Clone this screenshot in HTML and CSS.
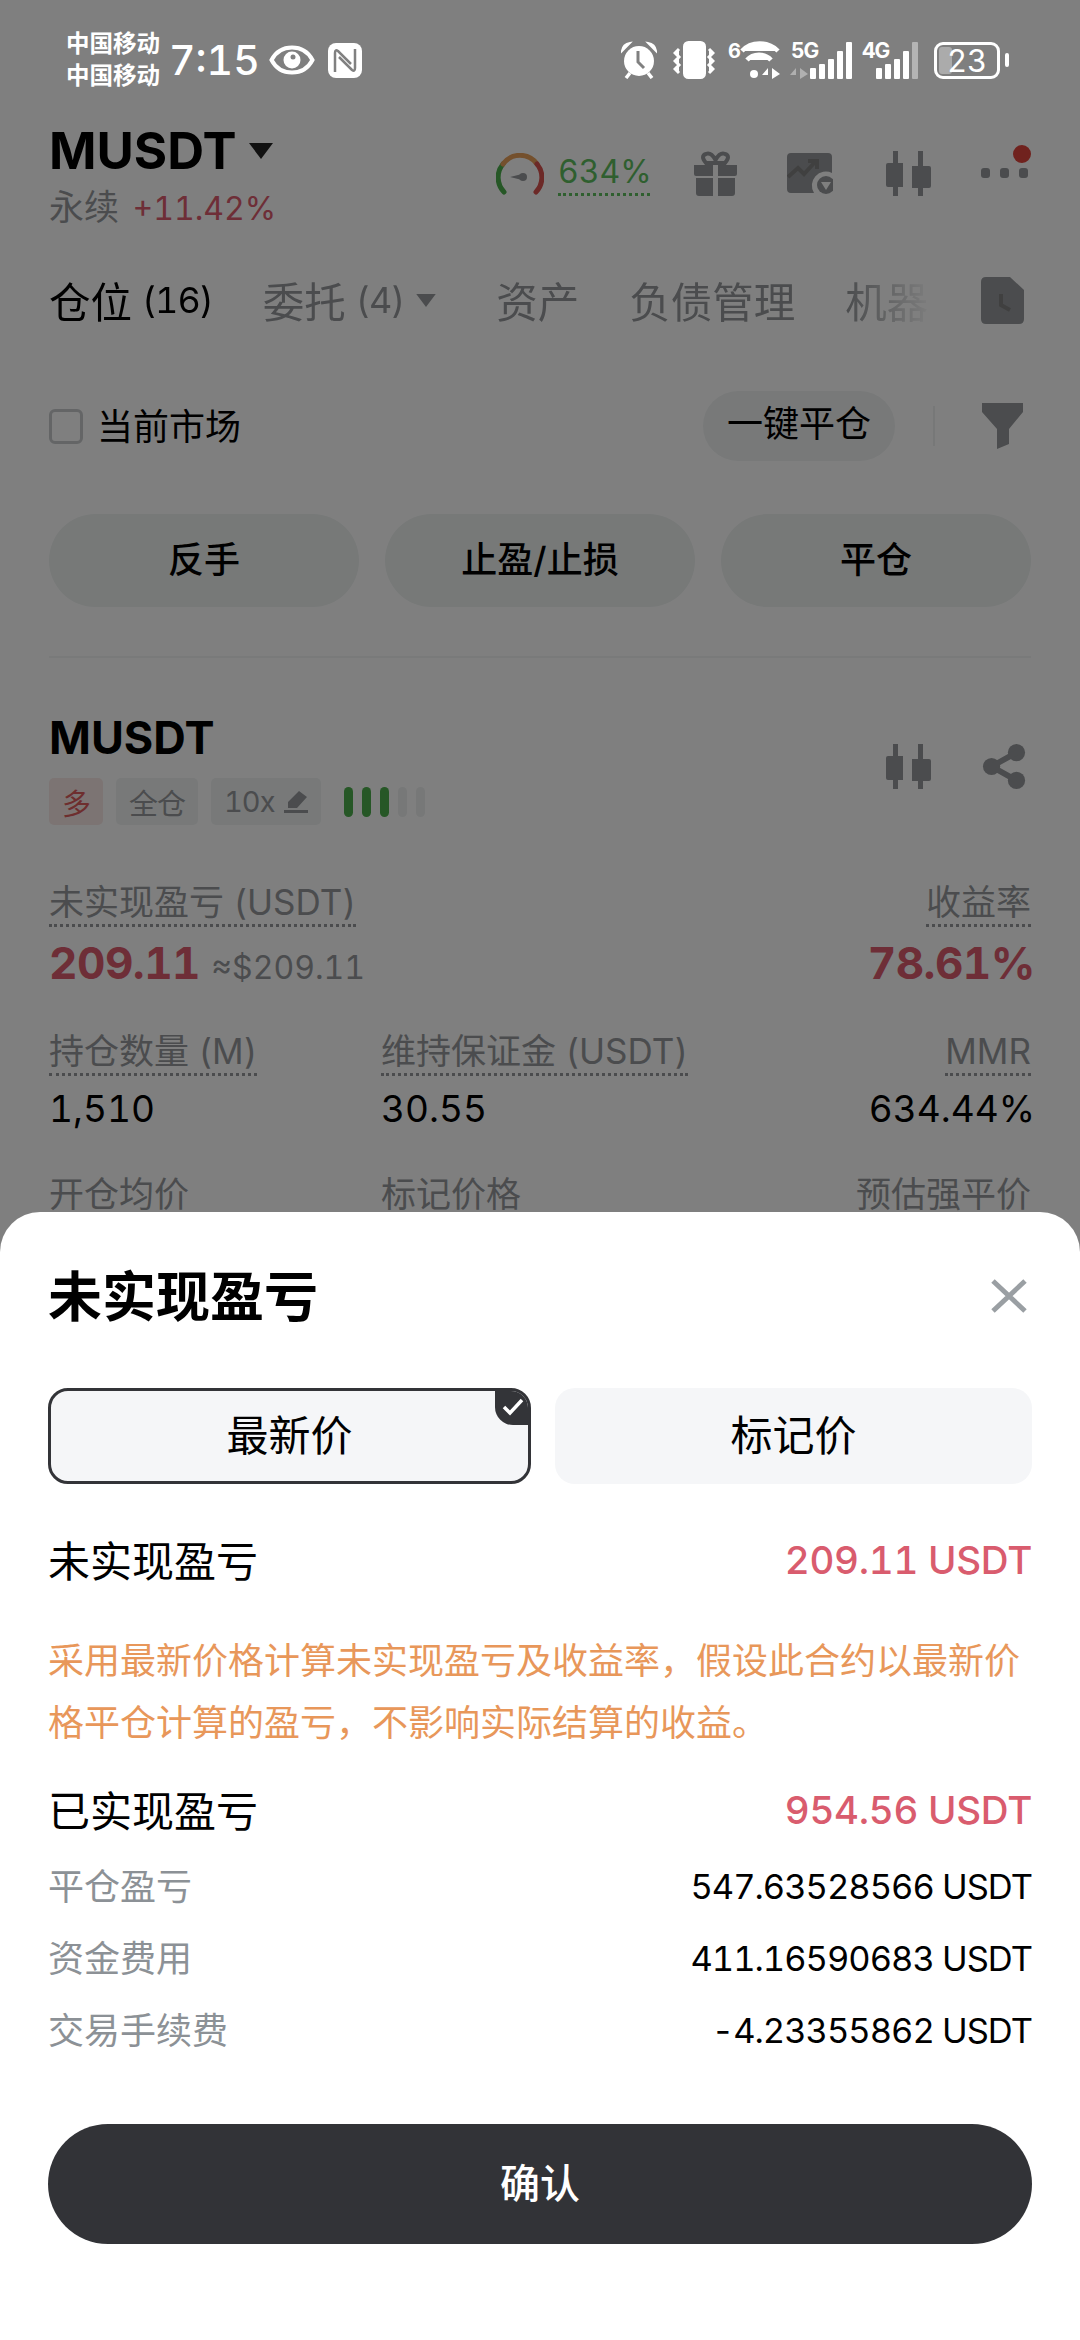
FILE: index.html
```html
<!DOCTYPE html>
<html lang="zh-CN">
  <head>
    <meta charset="UTF-8">
    <title>MUSDT</title>
    <link rel="stylesheet" href="styles.css">
  </head>

  <body>
    <div id="page">
      <div class="head">
        <div>
          <div class="symbol">MUSDT <svg class="caret" viewBox="0 0 24 16"><path d="M0 0H24L12 16Z"/></svg></div>
          <div class="sub">永续 <span class="red sub__pct">+11.42%</span></div>
        </div>
        <div class="head__tools">
          <svg class="gauge" viewBox="0 0 48 42" fill="none" stroke-width="5" stroke-linecap="round">
            <path d="M8 39A21 21 0 0 1 7 11" stroke="#4cae4c"/>
            <path d="M7 11A21 21 0 0 1 41 11" stroke="#e8a05a"/>
            <path d="M41 11A21 21 0 0 1 40 39" stroke="#d9534f"/>
            <path d="M14 24L26 21V27Z" fill="#96999c" stroke="none"/>
            <circle cx="27" cy="24" r="4" fill="#96999c" stroke="none"/>
          </svg>
          <div class="margin">634%</div>
          <svg class="tool tool--gift" viewBox="0 0 45 45">
            <path d="M1 14H20V25H3Q1 25 1 23ZM25 14H44V23Q44 25 42 25H25ZM3 27H20V45H6Q3 45 3 42ZM25 27H42V42Q42 45 39 45H25Z"/>
            <path d="M22.500 12L13 12Q7 5 13 3Q18 1 22.500 9Q27 1 32 3Q38 5 32 12Z" fill="none" stroke="#96999c" stroke-width="4"/>
          </svg>
          <svg class="tool tool--swap" viewBox="0 0 46 41">
            <path d="M4 0H41Q45 0 45 4V20A14 14 0 0 0 27 40H4Q0 40 0 36V4Q0 0 4 0Z"/>
            <path d="M1 24L11 15L17 21L29 8M21 8H30V16" fill="none" stroke="#808080" stroke-width="4"/>
            <circle cx="39" cy="32" r="9"/>
            <path d="M34 29H44L39 37Z" fill="#fff"/>
          </svg>
          <svg class="tool" viewBox="0 0 45 45"><path d="M7 0H12V12H17V36H12V45H7V36H2Q0 36 0 34V14Q0 12 2 12H7ZM32 0H37V15H43Q45 15 45 17V35Q45 37 43 37H37V45H32V37H26V15H32Z"/></svg>
          <div class="more">
            <i></i><i></i><i></i>
            <span class="more__dot"></span>
          </div>
        </div>
      </div>

      <div class="tabs">
        <div class="tabs__list">
          <div class="tab tab--on">仓位<span class="tab__n">(16)</span></div>
          <div class="tab">委托<span class="tab__n">(4)</span><svg class="caret caret--tab" viewBox="0 0 24 16"><path d="M0 0H24L12 16Z"/></svg></div>
          <div class="tab">资产</div>
          <div class="tab">负债管理</div>
          <div class="tab">机器</div>
        </div>
        <svg class="doc" viewBox="0 0 43 47"><path d="M5 0H29L43 13V42Q43 47 38 47H5Q0 47 0 42V5Q0 0 5 0Z"/><path d="M20 17V28L29 33" fill="none" stroke="#808080" stroke-width="4"/></svg>
      </div>

      <div class="filter">
        <label class="market"><span class="check"></span><span class="market__text">当前市场</span></label>
        <div class="filter__right">
          <div class="pill">一键平仓</div>
          <span class="vline"></span>
          <svg class="funnel" viewBox="0 0 41 46"><path d="M0 0H41V9L27 26V41L15 46V26L0 9Z"/></svg>
        </div>
      </div>

      <div class="actions">
        <div class="action">反手</div>
        <div class="action">止盈/止损</div>
        <div class="action">平仓</div>
      </div>

      <div class="card">
        <div class="card__top">
          <div>
            <div class="card__name">MUSDT</div>
            <div class="tags">
              <span class="tag tag--long">多</span>
              <span class="tag">全仓</span>
              <span class="tag">10x <svg class="pen" viewBox="0 0 24 22"><path d="M15 0L23 6L13 17H4V11ZM0 19H24V22H0Z"/></svg></span>
              <span class="bars"><i class="on"></i><i class="on"></i><i class="on"></i><i></i><i></i></span>
            </div>
          </div>
          <div class="card__icons">
            <svg class="tool" viewBox="0 0 45 45"><path d="M7 0H12V12H17V36H12V45H7V36H2Q0 36 0 34V14Q0 12 2 12H7ZM32 0H37V15H43Q45 15 45 17V35Q45 37 43 37H37V45H32V37H26V15H32Z"/></svg>
            <svg class="tool" viewBox="0 0 45 47"><circle cx="35" cy="9" r="9"/><circle cx="9" cy="23.500" r="9"/><circle cx="35" cy="38" r="9"/><path d="M35 9L9 23.500L35 38" fill="none" stroke="#96999c" stroke-width="6"/></svg>
          </div>
        </div>

        <div class="pnl">
          <div>
            <div class="lbl"><span class="dotted">未实现盈亏 (USDT)</span></div>
            <div class="big red">209.11 <span class="approx">≈$209.11</span></div>
          </div>
          <div class="right">
            <div class="lbl"><span class="dotted">收益率</span></div>
            <div class="big red">78.61%</div>
          </div>
        </div>

        <div class="stats">
          <div>
            <div class="lbl"><span class="dotted">持仓数量 (M)</span></div>
            <div class="val">1,510</div>
          </div>
          <div>
            <div class="lbl"><span class="dotted">维持保证金 (USDT)</span></div>
            <div class="val">30.55</div>
          </div>
          <div class="right">
            <div class="lbl"><span class="dotted">MMR</span></div>
            <div class="val">634.44%</div>
          </div>
          <div class="lbl">开仓均价</div>
          <div class="lbl">标记价格</div>
          <div class="lbl right">预估强平价</div>
        </div>
      </div>
    </div>

    <div id="scrim"></div>

    <div class="status">
      <div class="carrier"><div>中国移动</div><div>中国移动</div></div>
      <div class="time">7:15</div>
      <svg class="st st--eye" viewBox="0 0 46 30">
        <path d="M2.500 15C7 6.500 14 2.500 23 2.500C32 2.500 39 6.500 43.500 15C39 23.500 32 27.500 23 27.500C14 27.500 7 23.500 2.500 15Z" fill="none" stroke="#fff" stroke-width="4"/>
        <circle cx="23" cy="15" r="8.500"/><circle cx="24" cy="12" r="2.500" fill="#808080"/>
      </svg>
      <svg class="st st--nfc" viewBox="0 0 34 35">
        <rect width="34" height="35" rx="8"/>
        <path d="M7 29V10Q7 6 10 8L23 21M27 6V25Q27 29 24 27L11 14" fill="none" stroke="#808080" stroke-width="2.500"/>
      </svg>
      <div class="status__gap"></div>
      <svg class="st st--alarm" viewBox="0 0 36 38">
        <circle cx="18" cy="20" r="15"/>
        <path d="M1 10Q2 3 9 2ZM35 10Q34 3 27 2Z" stroke="#fff" stroke-width="2"/>
        <path d="M5 37L9 32M31 37L27 32" stroke="#fff" stroke-width="3.500"/>
        <path d="M17 10V21L23 27" fill="none" stroke="#808080" stroke-width="3"/>
      </svg>
      <svg class="st st--vib" viewBox="0 0 42 38" fill="none" stroke="#fff" stroke-width="3">
        <rect x="11.500" y="1.500" width="20" height="35" rx="4"/>
        <path d="M6 8L2 12L6 16L2 20L6 24L2 28L6 32M36 8L40 12L36 16L40 20L36 24L40 28L36 32"/>
      </svg>
      <div class="wifi">
        <span class="wifi__gen">6</span>
        <svg class="st st--wifi" viewBox="0 0 41 38" fill="none" stroke="#fff" stroke-width="4.500">
          <path d="M3 10C12 0 29 0 39 10M8 19C14 12 26 12 32 19"/>
          <circle cx="15" cy="33" r="4" fill="#fff" stroke="none"/>
          <path d="M29 38V27L23 34H29ZM33 38V27L41 33L33 38Z" fill="#fff" stroke="none"/>
        </svg>
      </div>
      <div class="net">
        <div class="net__gen">5G</div>
        <svg class="net__arrows" viewBox="0 0 18 11"><path d="M6 11V0L0 7H6ZM10 11V0L18 6L10 11Z"/></svg>
        <div class="sig"><i class="sig__a"></i><i class="sig__b"></i><i class="sig__c"></i><i class="sig__d"></i><i class="sig__e"></i></div>
      </div>
      <div class="net net--4g">
        <div class="net__gen">4G</div>
        <div class="sig"><i class="sig__a"></i><i class="sig__b"></i><i class="sig__c"></i><i class="sig__d"></i><i class="sig__e sig__off"></i></div>
      </div>
      <div class="batt"><div class="batt__box"><span class="batt__fill"></span><span class="batt__num">23</span></div><span class="batt__nub"></span></div>
    </div>

    <div class="sheet">
      <div class="sheet__head">
        <div class="sheet__title">未实现盈亏</div>
        <svg class="close" viewBox="0 0 36 34" fill="none" stroke="#9a9fa3" stroke-width="5"><path d="M2 2L34 32M34 2L2 32"/></svg>
      </div>
      <div class="choice">
        <div class="choice__item choice__item--on">最新价
          <span class="badge"><svg viewBox="0 0 22 18" fill="none" stroke="#fff" stroke-width="3.500"><path d="M2 9L8 15L20 2"/></svg></span>
        </div>
        <div class="choice__item">标记价</div>
      </div>
      <div class="line line--main"><span class="line__name">未实现盈亏</span><span class="pink">209.11 USDT</span></div>
      <p class="note">采用最新价格计算未实现盈亏及收益率，假设此合约以最新价格平仓计算的盈亏，不影响实际结算的收益。</p>
      <div class="line line--main"><span class="line__name">已实现盈亏</span><span class="pink">954.56 USDT</span></div>
      <div class="line"><span class="muted">平仓盈亏</span><span>547.63528566 USDT</span></div>
      <div class="line"><span class="muted">资金费用</span><span>411.16590683 USDT</span></div>
      <div class="line"><span class="muted">交易手续费</span><span>-4.23355862 USDT</span></div>
      <div class="confirm">确认</div>
    </div>
  </body>
</html>
```

FILE: styles.css
```css
* {
  box-sizing: border-box;
  font-family: Inter, "Noto Sans CJK SC", sans-serif;
  font-variant-numeric: tabular-nums;
}
html, body {
  margin: 0;
  padding: 0;
  width: 1080px;
  height: 2340px;
  overflow: hidden;
  position: relative;
  background: #fff;
}
svg {
  display: block;
  flex: none;
}
i {
  display: block;
}

/* page under the sheet */
#page {
  padding: 121px 49px 0;
  color: #000;
}
#scrim {
  position: absolute;
  inset: 0;
  background: rgba(0,0,0,0.5);
}
.red {
  color: #dc5c6e;
}
.right {
  text-align: right;
}

.head {
  display: flex;
  justify-content: space-between;
}
.symbol {
  font-size: 51px;
  font-weight: bold;
  line-height: 60px;
  display: flex;
  align-items: center;
  gap: 12px;
}
.caret {
  width: 24px;
  height: 16px;
  fill: #222;
}
.sub {
  font-size: 35px;
  line-height: 46px;
  margin-top: 3px;
  color: #96999c;
}
.sub__pct {
  font-size: 32px;
  margin-left: 4px;
}
.head__tools {
  display: flex;
  align-items: flex-start;
  padding-top: 30px;
  margin-right: 3px;
}
.gauge {
  width: 48px;
  height: 42px;
  margin: 2px 14px 0 0;
}
.margin {
  width: 92px;
  font-size: 32px;
  line-height: 36px;
  margin-top: 3px;
  padding-bottom: 3px;
  color: #5fbf5f;
  border-bottom: 3px dotted #5fbf5f;
  margin-right: 43px;
  white-space: nowrap;
}
.tool {
  width: 45px;
  height: 45px;
  fill: #96999c;
}
.tool--swap {
  width: 46px;
  height: 41px;
  margin: 2px 53px 0 49px;
}
.more {
  position: relative;
  display: flex;
  gap: 10px;
  margin: 17px 0 0 50px;
}
.more i {
  width: 9px;
  height: 10px;
  border-radius: 3px;
  background: #96999c;
}
.more__dot {
  position: absolute;
  right: -3px;
  top: -23px;
  width: 18px;
  height: 18px;
  border-radius: 50%;
  background: #e0443c;
}

.tabs {
  display: flex;
  justify-content: space-between;
  align-items: center;
  height: 60px;
  margin-top: 38px;
  margin-right: 8px;
}
.tabs__list {
  display: flex;
  width: 885px;
  overflow: hidden;
  white-space: nowrap;
  -webkit-mask-image: linear-gradient(to right, #000 90%, transparent 100%);
  mask-image: linear-gradient(to right, #000 90%, transparent 100%);
}
.tab {
  font-size: 41.500px;
  color: #96999c;
  margin-right: 50px;
  display: flex;
  align-items: center;
  flex: none;
}
.tab--on {
  color: #000;
}
.tab__n {
  font-size: 36px;
  letter-spacing: -1px;
  margin-left: 10px;
}
.caret--tab {
  margin: 0 10px 0 12px;
  width: 20px;
  height: 13px;
  fill: #96999c;
}
.doc {
  width: 43px;
  height: 47px;
  margin-right: -1px;
  fill: #96999c;
}

.filter {
  display: flex;
  justify-content: space-between;
  align-items: center;
  height: 70px;
  margin-top: 61px;
  margin-right: 6px;
}
.market {
  display: flex;
  align-items: center;
  gap: 14px;
  font-size: 36px;
}
.market__text {
  padding-bottom: 5px;
}
.check {
  width: 34px;
  height: 35px;
  border: 3px solid #c8cbcd;
  border-radius: 6px;
}
.filter__right {
  display: flex;
  align-items: center;
}
.pill {
  width: 192px;
  height: 70px;
  border-radius: 35px;
  background: #f0f3f3;
  font-size: 36px;
  line-height: 66px;
  text-align: center;
}
.vline {
  width: 2px;
  height: 40px;
  margin: 0 47px 0 38px;
  background: #eef0f0;
}
.funnel {
  width: 41px;
  height: 46px;
  margin-right: 2px;
  fill: #96999c;
}

.actions {
  display: flex;
  gap: 26px;
  margin-top: 53px;
  padding-bottom: 49px;
  border-bottom: 2px solid #f3f4f4;
}
.action {
  flex: 1;
  height: 93px;
  line-height: 93px;
  border-radius: 47px;
  background: #eef2f1;
  text-align: center;
  font-size: 36px;
  font-weight: 500;
}

.card__top {
  display: flex;
  justify-content: space-between;
  margin-top: 52px;
}
.card__name {
  font-size: 45px;
  font-weight: bold;
  line-height: 56px;
}
.card__icons {
  display: flex;
  gap: 51px;
  margin: 34px 4px 0 0;
}
.tags {
  display: flex;
  align-items: center;
  gap: 13px;
  margin-top: 12px;
}
.tag {
  display: flex;
  align-items: center;
  gap: 10px;
  height: 47px;
  padding: 0 13px;
  border-radius: 5px;
  background: #f0f3f3;
  color: #96999c;
  font-size: 29px;
  letter-spacing: -1px;
}
.tag--long {
  background: #f8e9e7;
  color: #dc5c5c;
}
.pen {
  width: 24px;
  height: 22px;
  fill: #96999c;
}
.bars {
  display: flex;
  gap: 9px;
  margin-left: 10px;
}
.bars i {
  width: 9px;
  height: 30px;
  border-radius: 5px;
  background: #eef0f0;
}
.bars .on {
  background: #4cae4c;
}

.pnl {
  display: flex;
  justify-content: space-between;
  margin-top: 55px;
}
.lbl {
  font-size: 35px;
  line-height: 44px;
  color: #96999c;
}
.dotted {
  display: inline-block;
  border-bottom: 3px dotted #96999c;
}
.big {
  font-size: 44px;
  font-weight: bold;
  line-height: 50px;
  margin-top: 11px;
  letter-spacing: -0.500px;
}
.approx {
  font-size: 32px;
  font-weight: normal;
  color: #96999c;
  margin-left: 0;
  letter-spacing: 0;
}
.stats {
  display: grid;
  grid-template-columns: 332px 1fr auto;
  margin-top: 36px;
  row-gap: 41px;
}
.val {
  font-size: 37px;
  line-height: 44px;
  margin-top: 11px;
}
.right .big, .right .val {
  margin-right: -4px;
}

/* status bar stays above the scrim */
.status {
  position: absolute;
  left: 0;
  top: 0;
  width: 100%;
  height: 120px;
  padding: 0 71px 0 66px;
  display: flex;
  align-items: center;
  color: #fff;
}
.st {
  fill: #fff;
}
.carrier {
  font-size: 23.500px;
  line-height: 32px;
  font-weight: bold;
  white-space: nowrap;
}
.time {
  width: 86px;
  font-size: 41px;
  font-weight: 500;
  margin: 0 14px 0 9px;
  white-space: nowrap;
}
.st--eye {
  width: 46px;
  height: 30px;
}
.st--nfc {
  width: 34px;
  height: 35px;
  margin-left: 13px;
}
.status__gap {
  flex: 1;
}
.st--alarm {
  width: 36px;
  height: 38px;
}
.st--vib {
  width: 42px;
  height: 38px;
  margin-left: 16px;
}
.wifi {
  display: flex;
  margin-left: 13px;
}
.wifi__gen {
  width: 11px;
  font-size: 20px;
  font-weight: bold;
  line-height: 20px;
  align-self: flex-start;
}
.st--wifi {
  width: 41px;
  height: 38px;
}
.net {
  position: relative;
  width: 61px;
  height: 38px;
  margin-left: 11px;
}
.net--4g {
  width: 56px;
  margin-left: 10px;
}
.net__gen {
  font-size: 21px;
  font-weight: bold;
  line-height: 20px;
  letter-spacing: -1px;
}
.net__arrows {
  position: absolute;
  left: -1px;
  bottom: 0;
  width: 18px;
  height: 11px;
  fill: #b0b0b0;
}
.sig {
  position: absolute;
  right: 0;
  bottom: 0;
  display: flex;
  align-items: flex-end;
  gap: 3px;
}
.sig i {
  width: 6px;
  background: #fff;
  border-radius: 1px;
}
.sig__a { height: 11px; }
.sig__b { height: 15px; }
.sig__c { height: 20px; }
.sig__d { height: 28px; }
.sig__e { height: 37px; }
.sig i.sig__off { background: #b4b4b4; }
.batt {
  display: flex;
  align-items: center;
  margin-left: 16px;
}
.batt__box {
  position: relative;
  width: 66px;
  height: 37px;
  border: 3px solid #fff;
  border-radius: 9px;
  text-align: center;
  font-size: 31px;
  line-height: 31px;
}
.batt__fill {
  position: absolute;
  left: 2px;
  top: 2px;
  bottom: 2px;
  width: 13px;
  border-radius: 3px;
  background: #ababab;
}
.batt__num {
  position: relative;
}
.batt__nub {
  width: 4px;
  height: 14px;
  margin-left: 5px;
  border-radius: 2px;
  background: #fff;
}

/* bottom sheet */
.sheet {
  position: absolute;
  left: 0;
  top: 1212px;
  width: 100%;
  height: 1128px;
  padding: 0 48px;
  background: #fff;
  border-radius: 40px 40px 0 0;
  color: #000;
}
.sheet__head {
  display: flex;
  justify-content: space-between;
  align-items: center;
  height: 66px;
  margin-top: 48px;
}
.sheet__title {
  font-size: 54px;
  font-weight: bold;
}
.close {
  width: 36px;
  height: 34px;
  margin: 6px 5px 0 0;
}
.choice {
  display: flex;
  gap: 24px;
  margin-top: 62px;
}
.choice__item {
  position: relative;
  flex: 1;
  height: 96px;
  border-radius: 20px;
  background: #f5f6f8;
  font-size: 42px;
  line-height: 96px;
  text-align: center;
  overflow: hidden;
}
.choice__item--on {
  border: 3px solid #333438;
  line-height: 90px;
}
.badge {
  position: absolute;
  right: -3px;
  top: -3px;
  width: 36px;
  height: 37px;
  background: #333438;
  border-bottom-left-radius: 18px;
  display: flex;
  align-items: center;
  justify-content: center;
}
.badge svg {
  width: 22px;
  height: 18px;
}
.line {
  display: flex;
  justify-content: space-between;
  align-items: center;
  height: 72px;
  font-size: 34.500px;
  letter-spacing: -1px;
}
.line--main {
  font-size: 38.500px;
  height: 60px;
  font-weight: 500;
  letter-spacing: -0.300px;
}
.line .line__name {
  font-size: 42px;
  font-weight: normal;
  padding-bottom: 4px;
  letter-spacing: 0;
}
.line .muted {
  font-size: 36px;
  padding-bottom: 4px;
  letter-spacing: 0;
}
.choice + .line {
  margin-top: 46px;
}
.line--main + .line {
  margin-top: 10px;
}
.pink {
  color: #d95c6e;
}
.muted {
  color: #8c9196;
}
.note {
  margin: 40px 0 26px;
  font-size: 36px;
  line-height: 62px;
  color: #e8975a;
}
.confirm {
  height: 120px;
  margin-top: 58px;
  border-radius: 60px;
  background: #323337;
  color: #fff;
  font-size: 40px;
  font-weight: 500;
  line-height: 120px;
  text-align: center;
}
```
